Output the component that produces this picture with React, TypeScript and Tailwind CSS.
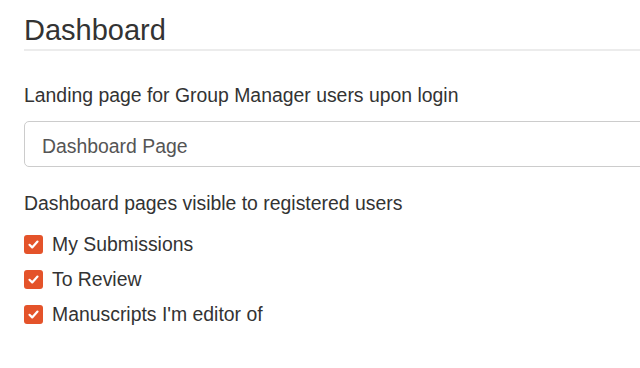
import React from "react";

function Check({ label }: { label: string }) {
  return (
    <div className="flex items-center h-[35px]">
      <span className="w-[19px] h-[19px] rounded-[3px] bg-[#e4532a] flex items-center justify-center shrink-0">
        <svg width="13" height="13" viewBox="0 0 13 13" fill="none">
          <path d="M2.5 6.8 L5.2 9.4 L10.5 3.6" stroke="#fff" strokeWidth="2.2" strokeLinecap="round" strokeLinejoin="round" />
        </svg>
      </span>
      <span className="ml-[9px] text-[19.4px] text-[#333]">{label}</span>
    </div>
  );
}

export default function App() {
  return (
    <div className="w-[640px] h-[368px] overflow-hidden bg-white" style={{ fontFamily: '"Liberation Sans", Arial, sans-serif' }}>
      <div className="w-[720px] pl-6">
        <h1 className="pt-[14px] pb-[3px] text-[29px] leading-[32px] font-normal text-[#333] border-b-2 border-[#ececec]">
          Dashboard
        </h1>
        <div className="mt-[30px] text-[19.4px] leading-[28px] text-[#333]">
          Landing page for Group Manager users upon login
        </div>
        <div className="mt-[12px] h-[46px] rounded-[5px] border border-[#cccccc] flex items-center pl-[17px] pt-[5px] text-[19.4px] text-[#555]">
          Dashboard Page
        </div>
        <div className="mt-[22px] text-[19.4px] leading-[28px] text-[#333]">
          Dashboard pages visible to registered users
        </div>
        <div className="mt-[10px] flex flex-col">
          <Check label="My Submissions" />
          <Check label="To Review" />
          <Check label="Manuscripts I'm editor of" />
        </div>
      </div>
    </div>
  );
}
